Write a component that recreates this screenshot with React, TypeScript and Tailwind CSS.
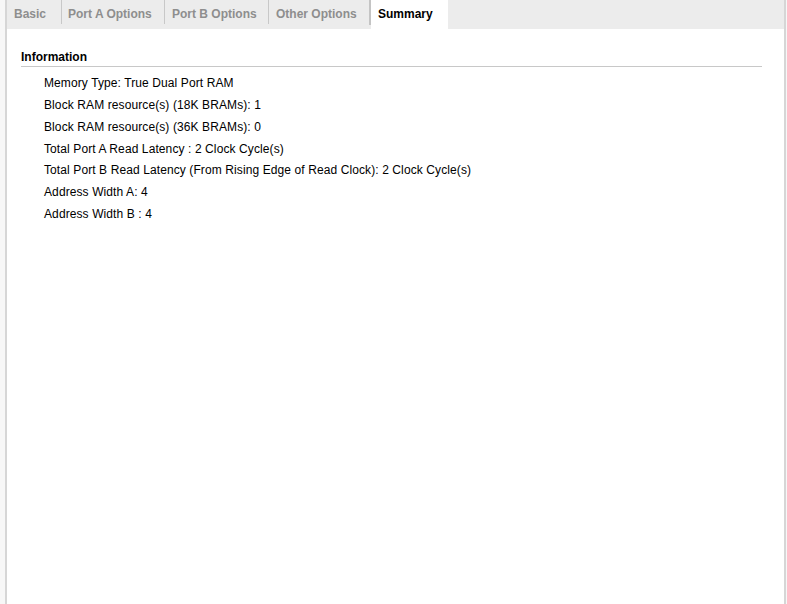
import React from "react";

const tabs = [
  { label: "Basic", w: "w-[54px]", pl: "pl-[7px]" },
  { label: "Port A Options", w: "w-[102px]", pl: "pl-[6px]" },
  { label: "Port B Options", w: "w-[103px]", pl: "pl-[7px]" },
  { label: "Other Options", w: "w-[100px]", pl: "pl-[7px]" },
];

const lines = [
  "Memory Type: True Dual Port RAM",
  "Block RAM resource(s) (18K BRAMs): 1",
  "Block RAM resource(s) (36K BRAMs): 0",
  "Total Port A Read Latency : 2 Clock Cycle(s)",
  "Total Port B Read Latency (From Rising Edge of Read Clock): 2 Clock Cycle(s)",
  "Address Width A: 4",
  "Address Width B : 4",
];

export default function App() {
  return (
    <div
      className="flex h-[604px] w-[787px] overflow-hidden bg-white text-[12px] text-black"
      style={{ fontFamily: '"Liberation Sans", Arial, sans-serif' }}
    >
      <div className="w-[5px] bg-[#f7f7f7]" />
      <div className="w-[2px] bg-[#d6d6d6]" />
      <div className="flex flex-1 flex-col">
        <div className="flex h-[29px] bg-[#ececec]">
          {tabs.map((t, i) => (
            <React.Fragment key={t.label}>
              <div
                className={`${t.w} ${t.pl} flex h-[29px] items-center pb-[2px] font-bold text-[#8e8e8e]`}
              >
                {t.label}
              </div>
              <div
                className={
                  i === tabs.length - 1
                    ? "h-[25px] w-[2px] bg-[#c4c4c4]"
                    : "h-[24px] w-[1px] bg-[#c8c8c8]"
                }
              />
            </React.Fragment>
          ))}
          <div className="flex h-[29px] w-[77px] items-center bg-white pb-[2px] pl-[7px] font-bold text-black">
            Summary
          </div>
        </div>
        <div className="flex-1 pl-[14px] pr-[22px] pt-[21px]">
          <div className="border-b border-[#c8c8c8] pb-[2px] font-bold leading-[14px]">
            Information
          </div>
          <div className="mt-[6px] pl-[23px] tracking-[0.1px]">
            {lines.map((l) => (
              <div key={l} className="h-[21.85px] leading-[21.85px]">
                {l}
              </div>
            ))}
          </div>
        </div>
      </div>
      <div className="w-[2px] bg-[#d6d6d6]" />
      <div className="w-[1px] bg-[#f7f7f7]" />
    </div>
  );
}
